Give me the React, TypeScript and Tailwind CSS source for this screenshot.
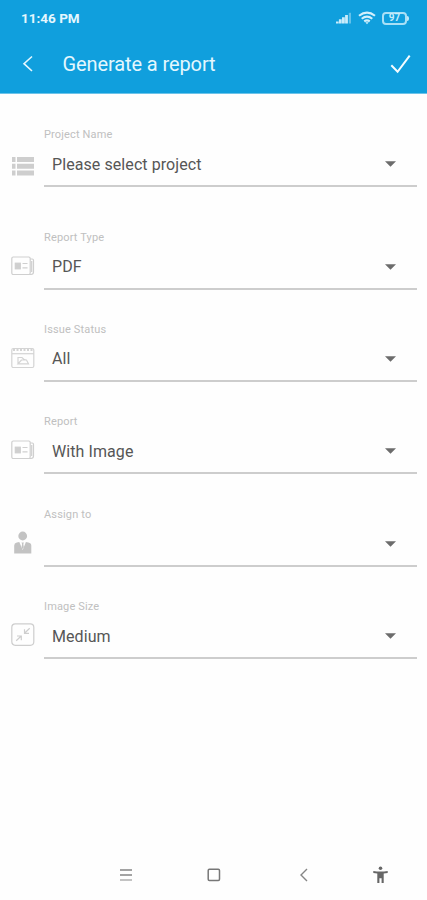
import type { ReactNode } from 'react';

const ListIcon = () => (
  <svg width="24" height="26" viewBox="0 0 24 26" fill="#cecece">
    <path d="M1 6h3.5v5H1zM6 6h17v5H6zM1 12.7h3.5v5H1zM6 12.7h17v5H6zM1 19.4h3.5v5H1zM6 19.4h17v5H6z" />
  </svg>
);

const NewsIcon = () => (
  <svg width="24" height="24" viewBox="0 0 24 24" fill="none" stroke="#cfcfcf" strokeWidth="1.2">
    <rect x="0.8" y="3" width="18.4" height="17.5" rx="1.5" />
    <path d="M19.2 5h2q1.3 0 1.3 1.3v11.8q0 2.4-2.4 2.4h-2M20.7 7v11" />
    <rect x="4.3" y="9.2" width="5" height="5.6" fill="#cfcfcf" />
    <path d="M11.5 9.5h5M11.5 13.8h5" />
  </svg>
);

const CalendarIcon = () => (
  <svg width="24" height="24" viewBox="0 0 24 24" fill="none" stroke="#d4d4d4" strokeWidth="1.2">
    <rect x="0.8" y="2.5" width="22" height="19" rx="1.5" />
    <path d="M1 7.7h22" />
    <path d="M2 4h20" strokeWidth="2" strokeDasharray="2 1.5" />
    <path d="M7 17.8v-6.3h4l2 2h1.5M7 17.8h10.5l-2-3.8h-5zM7 17.8l3.5-3.8" />
  </svg>
);

const PersonIcon = () => (
  <svg width="24" height="24" viewBox="0 0 24 24" fill="#c3c3c3">
    <circle cx="11.7" cy="5" r="4.4" />
    <path d="M3.2 22.5v-8q0-2.5 2.6-3L8.3 11l3.4 8 3.2-8 2.4.5q3 .5 3 3v8z" />
    <path d="M10.5 11.5h2.4l-.6 1.6.5 3.2-1.1 2-1.1-2 .5-3.2z" />
  </svg>
);

const ShrinkIcon = () => (
  <svg width="24" height="24" viewBox="0 0 24 24" fill="none" stroke="#cecece" strokeWidth="1.2">
    <rect x="0.8" y="0.8" width="22" height="21.5" rx="3.5" />
    <path d="M18.7 5.3l-5.2 5M13.5 6.3v4h4.5M5.2 17.8l5-4.8M6 13h4.3v4.3" />
  </svg>
);

const SignalIcon = () => (
  <svg width="16" height="12" viewBox="0 0 16 12" fill="#c9ecfb">
    <path d="M0 9.5h2.6v2H0zM2.9 7.3h2.8v4.2H2.9zM6 5.2h2.8v6.3H6zM9.1 3h2.8v8.5H9.1z" />
    <path d="M12.8.8H15v10.7h-2.2z" opacity="0.45" />
  </svg>
);

const WifiIcon = () => (
  <svg width="18" height="14" viewBox="0 0 18 14" fill="none" stroke="#d3f0fc" strokeWidth="2.1">
    <path d="M1 4.8Q9-1.6 17 4.8M3.7 7.8q5.3-4.2 10.6 0M6.2 10.4q2.8-2 5.6 0" />
    <path d="M7.3 11.3h3.4L9 13.2z" fill="#d3f0fc" stroke="none" />
  </svg>
);

interface FieldProps {
  label: string;
  value: string;
  icon: ReactNode;
}

function Field({ label, value, icon }: FieldProps) {
  return (
    <div className="flex h-[60px]">
      <div className="w-[44px] shrink-0 pt-[24px] pl-[10.5px]">{icon}</div>
      <div className="flex flex-1 flex-col border-b-2 border-[#cdcdcd]">
        <span className="h-[15px] text-[11px] leading-[15px] tracking-[0.15px] text-[#c0c0c0]">{label}</span>
        <div className="flex h-[43px] items-center justify-between pt-px pr-[21px] pl-2">
          <span className="pt-px text-[16px] leading-5 tracking-[0.08px] text-[#565656]">{value}</span>
          <svg width="11" height="6" viewBox="0 0 11 6" fill="#6c6c6c">
            <path d="M0 .2h11L5.5 5.8z" />
          </svg>
        </div>
      </div>
    </div>
  );
}

export default function App() {
  return (
    <div className="flex h-[900px] w-full flex-col bg-[#fefefe] font-['Roboto',sans-serif]">
      <header className="h-[94px] border-b border-[#6cc3e9] bg-[#109fdd] text-[#e4f7fe]">
        <div className="flex h-9 items-center justify-between pr-[18px] pl-[21px]">
          <span className="text-[13.5px] font-bold">11:46 PM</span>
          <div className="flex items-center gap-[6px]">
            <SignalIcon />
            <WifiIcon />
            <div className="flex items-center">
              <div className="flex h-[13px] w-[25px] items-center justify-center rounded-[4px] border-2 border-[#a9e0f6] text-[10px] leading-none font-bold text-[#c9ecfb]">
                97
              </div>
              <div className="h-[5px] w-[2px] rounded-r-sm bg-[#bfe8f9]" />
            </div>
          </div>
        </div>
        <div className="flex h-14 items-center pr-4 pl-[22px]">
          <svg width="12" height="18" viewBox="0 0 12 18" fill="none" stroke="currentColor" strokeWidth="1.6">
            <path d="M10 1.5L2 8.7l8 7.3" />
          </svg>
          <h1 className="ml-[28.5px] flex-1 text-[20px] leading-6 font-normal tracking-[-0.1px]">Generate a report</h1>
          <svg width="21" height="20" viewBox="0 0 21 20" fill="none" stroke="#f4fcff" strokeWidth="2">
            <path d="M1.3 11.3l6.3 6.5L19.7 1.7" />
          </svg>
        </div>
      </header>
      <main className="flex-1 pt-[33px] pr-[10px]">
        <Field label="Project Name" value="Please select project" icon={<ListIcon />} />
        <div className="mt-[42.6px] flex flex-col gap-[32.4px]">
          <Field label="Report Type" value="PDF" icon={<NewsIcon />} />
          <Field label="Issue Status" value="All" icon={<CalendarIcon />} />
          <Field label="Report" value="With Image" icon={<NewsIcon />} />
          <Field label="Assign to" value="" icon={<PersonIcon />} />
          <Field label="Image Size" value="Medium" icon={<ShrinkIcon />} />
        </div>
      </main>
      <nav className="flex h-[50px] items-center pl-[119px]">
        <svg width="14" height="14" viewBox="0 0 14 14" stroke="#858585" strokeWidth="1.4">
          <path d="M1 2h12M1 7h12" />
          <path d="M1 12h12" stroke="#aaa" />
        </svg>
        <svg className="ml-[74px]" width="14" height="14" viewBox="0 0 14 14" fill="none" stroke="#777" strokeWidth="1.5">
          <rect x="1.2" y="1.2" width="11.3" height="11.3" rx="1.2" />
        </svg>
        <svg className="ml-[79px]" width="8" height="14" viewBox="0 0 8 14" fill="none" stroke="#858585" strokeWidth="1.4">
          <path d="M7 1L1 7l6 6" />
        </svg>
        <svg className="ml-[65px]" width="15" height="18" viewBox="0 0 15 18" fill="#666">
          <circle cx="7.5" cy="2.3" r="1.8" />
          <path d="M.3 5q7.2 1.2 14.4 0v2l-4 .6V17H8.6v-4.8H6.4V17H4.3V7.6L.3 7z" />
        </svg>
      </nav>
    </div>
  );
}
